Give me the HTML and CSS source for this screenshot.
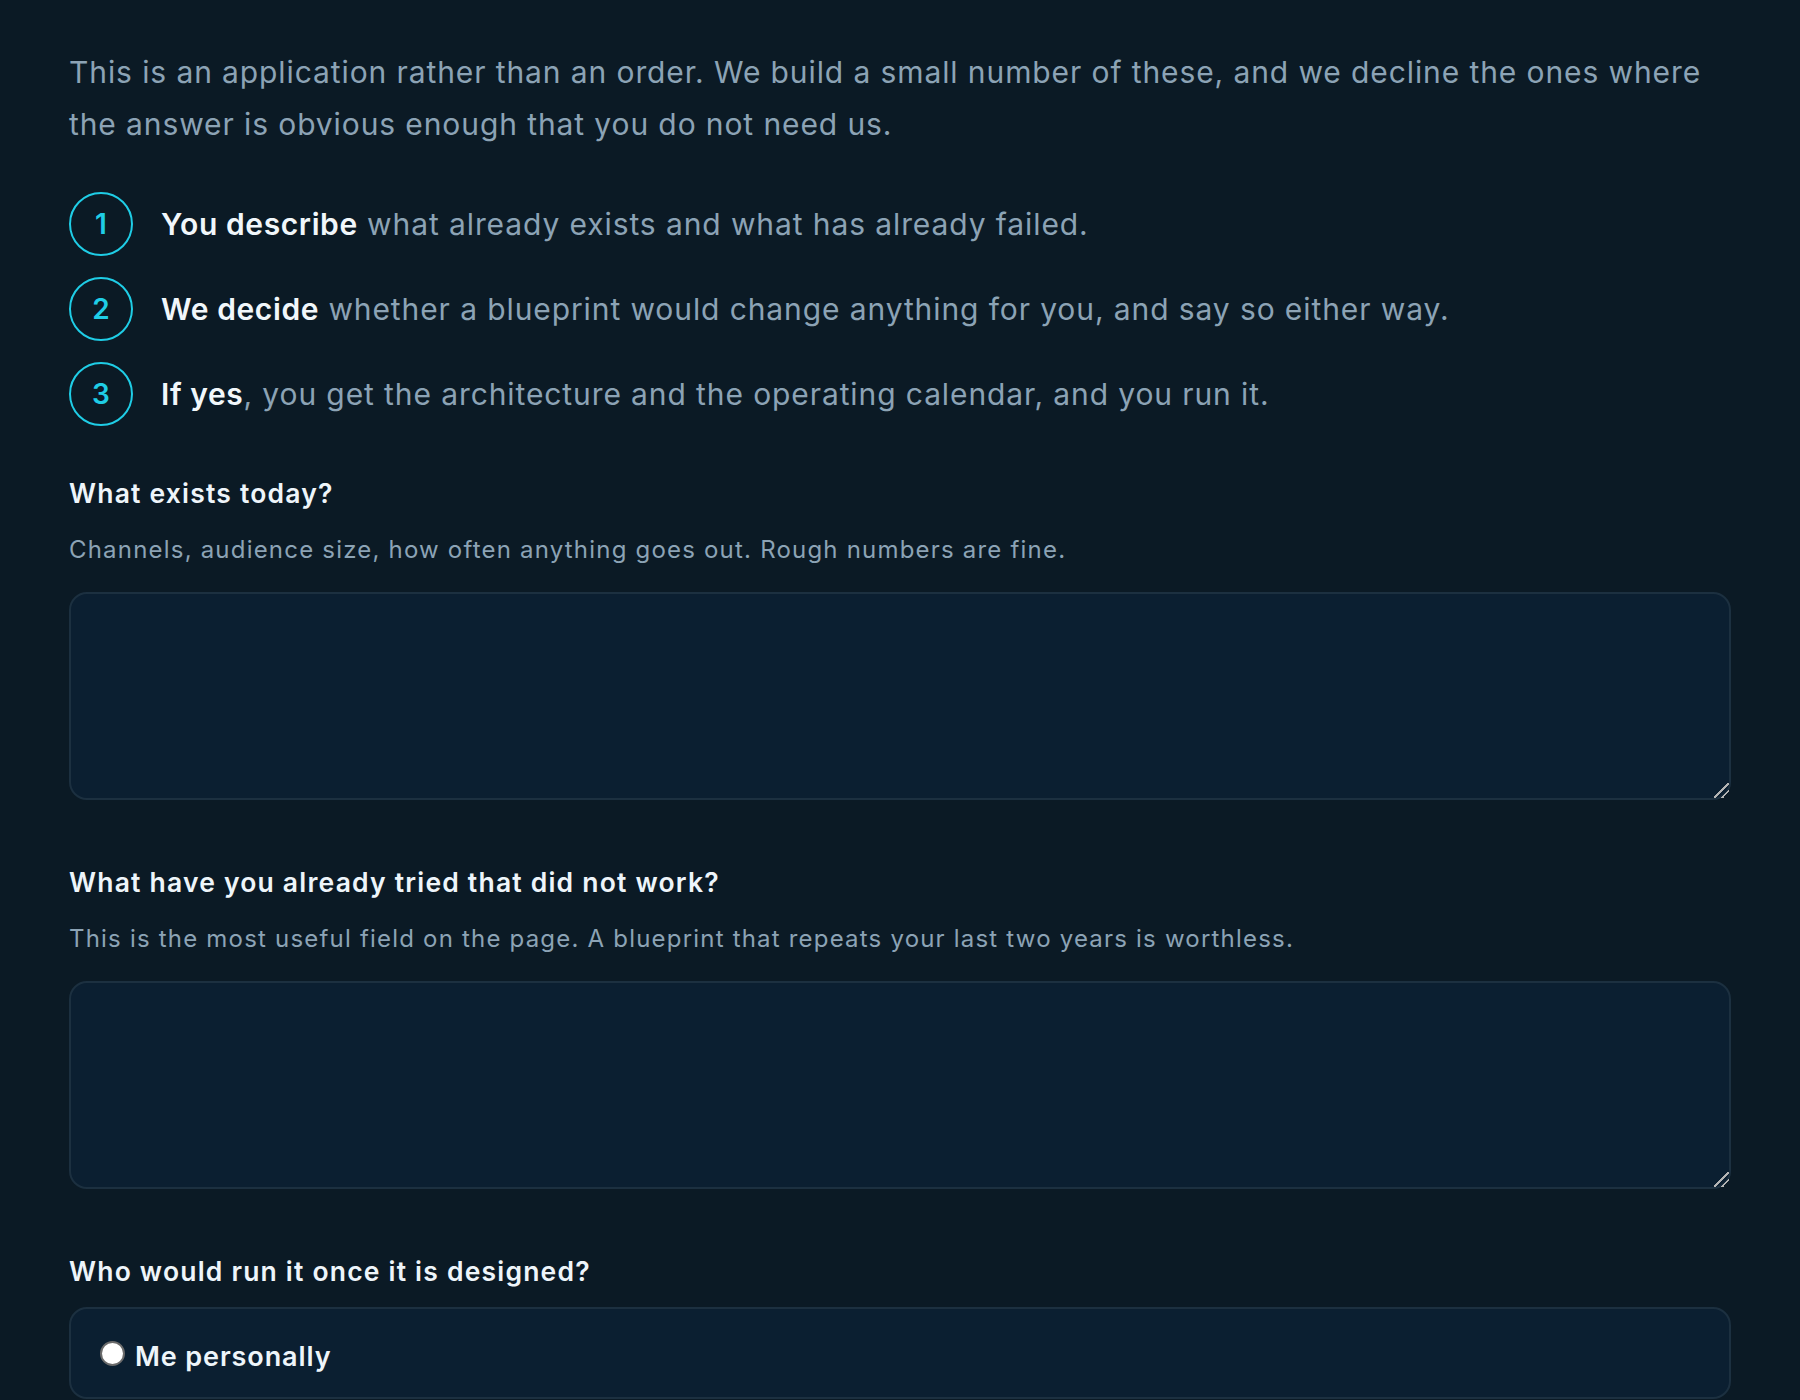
FILE: index.html
```html
<!DOCTYPE html>
<html lang="en">
<head>
    <meta charset="UTF-8">
    <meta name="viewport" content="width=device-width, initial-scale=1.0">
    <title>Apply for a blueprint</title>
    <link rel="stylesheet" href="styles.css">
</head>
<body>
    <main class="apply">
        <!-- Intro -->
        <p class="intro">This is an application rather than an order. We build a small number of these, and we decline the ones where the answer is obvious enough that you do not need us.</p>

        <!-- How it works -->
        <ol class="steps">
            <li class="step">
                <span class="step-num">1</span>
                <span class="step-text"><strong>You describe</strong> what already exists and what has already failed.</span>
            </li>
            <li class="step">
                <span class="step-num">2</span>
                <span class="step-text"><strong>We decide</strong> whether a blueprint would change anything for you, and say so either way.</span>
            </li>
            <li class="step">
                <span class="step-num">3</span>
                <span class="step-text"><strong>If yes</strong>, you get the architecture and the operating calendar, and you run it.</span>
            </li>
        </ol>

        <!-- Form -->
        <form class="apply-form">
            <div class="field">
                <label class="field-label" for="exists">What exists today?</label>
                <p class="field-hint">Channels, audience size, how often anything goes out. Rough numbers are fine.</p>
                <textarea id="exists" class="field-input"></textarea>
            </div>

            <div class="field">
                <label class="field-label" for="tried">What have you already tried that did not work?</label>
                <p class="field-hint">This is the most useful field on the page. A blueprint that repeats your last two years is worthless.</p>
                <textarea id="tried" class="field-input"></textarea>
            </div>

            <div class="field">
                <span class="field-label field-label-tight">Who would run it once it is designed?</span>
                <label class="option">
                    <input type="radio" name="runner" value="me">
                    <span>Me personally</span>
                </label>
            </div>
        </form>
    </main>
</body>
</html>
```

FILE: styles.css
```css
/* Base */
* {
    margin: 0;
    padding: 0;
    box-sizing: border-box;
}

body {
    background-color: #0b1a25;
    font-family: Inter, 'Noto Sans', sans-serif;
    color: #8ca3b5;
}

.apply {
    padding: 46px 69px 0;
}

/* Intro */
.intro {
    font-size: 30px;
    line-height: 52px;
    letter-spacing: 0.9px;
    margin-bottom: 42px;
}

/* Steps */
.steps {
    list-style: none;
    display: flex;
    flex-direction: column;
    gap: 21px;
    margin-bottom: 49px;
}

.step {
    display: flex;
    align-items: center;
    gap: 28px;
    font-size: 30px;
    letter-spacing: 0.9px;
}

.step-num {
    flex: none;
    width: 64px;
    height: 64px;
    border: 2px solid #1fcde6;
    border-radius: 50%;
    display: flex;
    align-items: center;
    justify-content: center;
    color: #1fcde6;
    font-size: 28px;
    font-weight: 600;
    letter-spacing: 0;
}

.step-text strong {
    color: #f1f7fb;
    font-weight: 600;
    letter-spacing: 0.6px;
}

/* Form */
.field {
    margin-bottom: 64px;
}

.field-label {
    display: block;
    color: #eef5fa;
    font-size: 26.5px;
    font-weight: 600;
    line-height: 36px;
    letter-spacing: 1.2px;
    margin-bottom: 21px;
}

.field-label-tight {
    margin-bottom: 18px;
}

.field-hint {
    font-size: 24px;
    line-height: 36px;
    letter-spacing: 1.2px;
    margin-bottom: 24px;
}

.field-input {
    display: block;
    width: 100%;
    height: 208px;
    background-color: #0b1f31;
    border: 2px solid #1c3040;
    border-radius: 18px;
    padding: 16px 20px;
    color: #eef5fa;
    font-family: inherit;
    font-size: 24px;
    outline: none;
}

.field-input::-webkit-resizer {
    background: linear-gradient(135deg, transparent 0 46%, #b4b4b4 46% 54%, transparent 54% 72%, #b4b4b4 72% 80%, transparent 80%);
}

.option {
    display: flex;
    align-items: center;
    gap: 10px;
    height: 92px;
    padding: 6px 29px 0;
    background-color: #0b1f31;
    border: 2px solid #1c3040;
    border-radius: 18px;
    color: #eef5fa;
    font-size: 27px;
    font-weight: 600;
    letter-spacing: 0.9px;
}

.option input {
    appearance: none;
    flex: none;
    width: 25px;
    height: 25px;
    margin: 0 0 5px;
    background-color: #ffffff;
    border: 2px solid #6b6b6b;
    border-radius: 50%;
}
```
